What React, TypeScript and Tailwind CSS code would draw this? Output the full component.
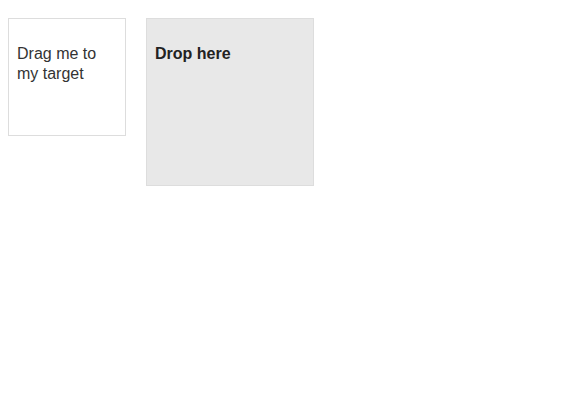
export default function App() {
  return (
    <div className="min-h-[416px] bg-white p-2 text-[16px] text-[#333]" style={{ fontFamily: '"Liberation Sans", Arial, sans-serif' }}>
      <div className="mt-[10px] flex items-start">
        <div className="box-border h-[118px] w-[118px] border border-[#dddddd] bg-white p-2">
          <p className="mt-[17px] leading-5">Drag me to my target</p>
        </div>
        <div className="ml-5 box-border h-[168px] w-[168px] border border-[#dddddd] bg-[#e8e8e8] p-2">
          <p className="mt-[17px] font-bold leading-5 text-[#222]">Drop here</p>
        </div>
      </div>
    </div>
  );
}
